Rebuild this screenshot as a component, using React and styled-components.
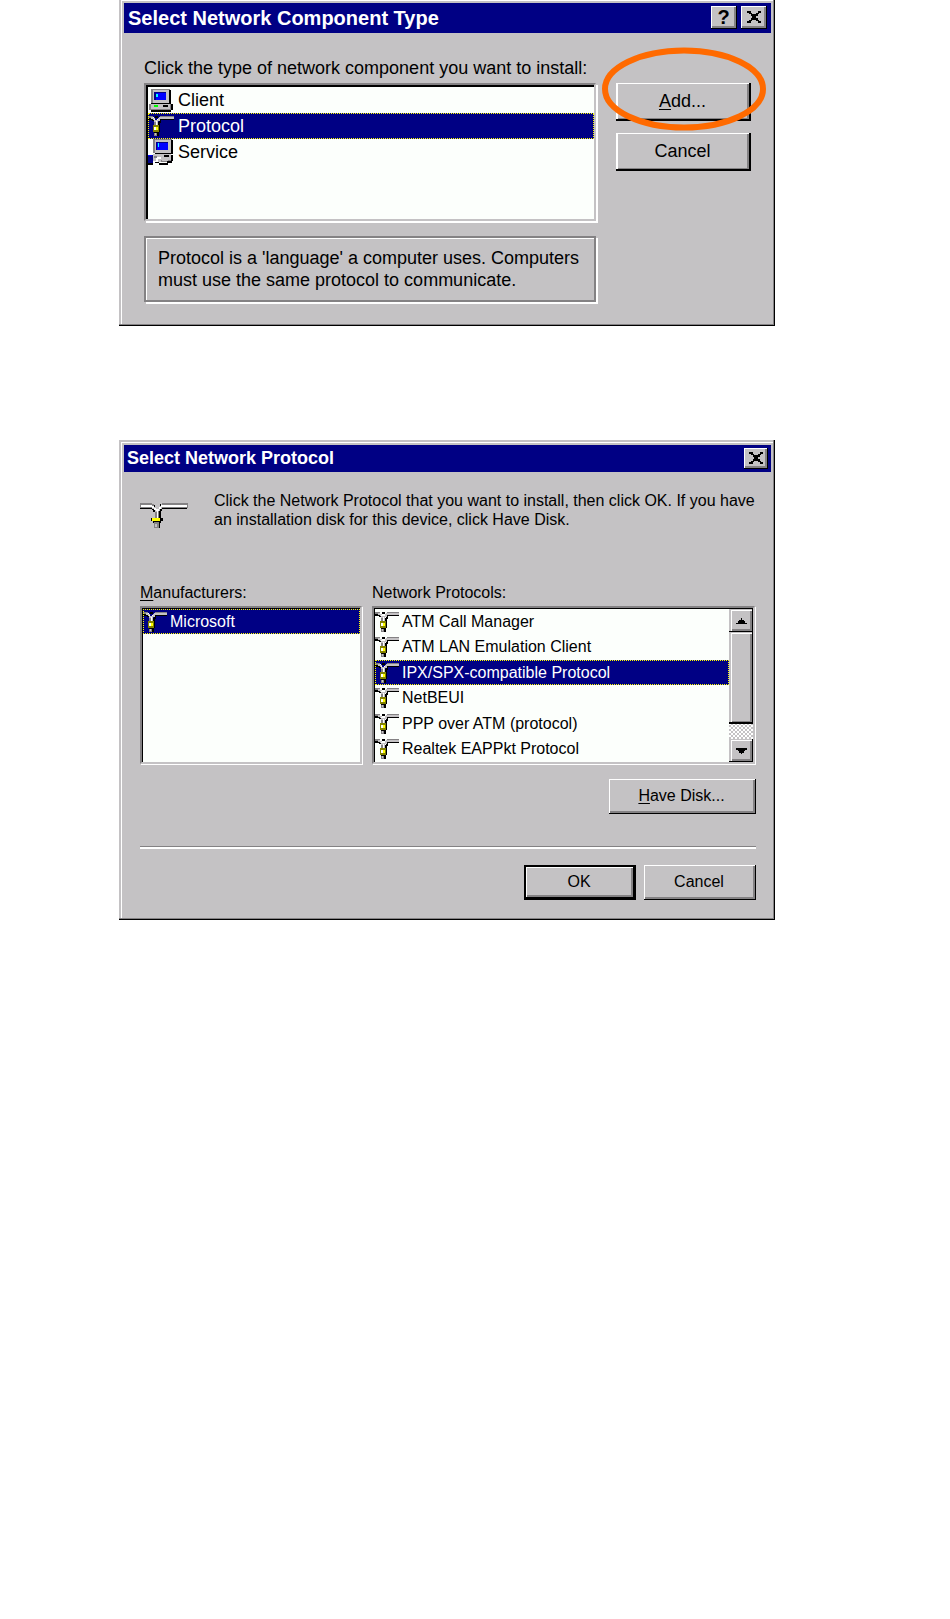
import React, { useState } from 'react'
import styled, { createGlobalStyle, css } from 'styled-components'

const face = '#c4c2c4'
const navy = '#000084'
const shade = '#848284'
const paper = '#fcfffc'

const components = [
  { name: 'Client', icon: 'client' },
  { name: 'Protocol', icon: 'protocol' },
  { name: 'Service', icon: 'service' },
]

const protocols = [
  'ATM Call Manager',
  'ATM LAN Emulation Client',
  'IPX/SPX-compatible Protocol',
  'NetBEUI',
  'PPP over ATM (protocol)',
  'Realtek EAPPkt Protocol',
]

const ClientIcon = () => (
  <svg width="26" height="26" viewBox="0 0 26 26" shapeRendering="crispEdges" aria-hidden="true">
    <path fill={shade} d="M3 2h19v14H3z" />
    <path fill={face} d="M5 3h16v13H5z" />
    <path fill="#000" d="M21 3h2v14h-2zM3 16h20v1H3z" />
    <path fill={navy} d="M6 5h12v8H6z" />
    <path fill="#00f" d="M8 6h10v7H8z" />
    <path fill="#0ff" d="M8 7h2v3H8z" />
    <path fill={shade} d="M1 17h22v6H1z" />
    <path fill={face} d="M3 17h19v5H3z" />
    <path fill="#0f0" d="M6 18h4v2H6z" />
    <path fill="#000" d="M15 18h5v2h-5zM23 17h2v6h-2zM3 23h20v2H3z" />
  </svg>
)

const ServiceIcon = () => (
  <svg width="26" height="28" viewBox="0 0 26 28" shapeRendering="crispEdges" aria-hidden="true">
    <path fill={shade} d="M5 1h19v14H5z" />
    <path fill={face} d="M7 2h16v13H7z" />
    <path fill="#000" d="M23 2h2v14h-2zM7 15h17v1H7z" />
    <path fill={navy} d="M8 4h12v8H8z" />
    <path fill="#00f" d="M9 5h11v7H9z" />
    <path fill="#0ff" d="M10 5h1v4h-1z" />
    <path fill={face} d="M5 16h18v7H5z" />
    <path fill="#fff" d="M8 19h5v5H8z" />
    <path fill={shade} d="M6 18h3v2H6zM13 22h10v2H13z" />
    <path fill={face} d="M10 21h3v3h-3zM14 21h6v2h-6z" />
    <path fill="#000" d="M16 17h5v2h-5zM23 17h2v6h-2zM7 24h4v1H7zM11 25h9v2h-9zM19 23h5v2h-5z" />
    <path fill={navy} d="M0 17h5v8H0z" />
    <path fill="#00f" d="M0 17h4v1H0z" />
    <path fill="#000" d="M0 25h5v2H0z" />
  </svg>
)

const ProtocolIcon = ({ size = 24 }) => (
  <svg width={size} height="24" viewBox={`0 0 ${size} 24`} shapeRendering="crispEdges" aria-hidden="true">
    <path fill={shade} d="M0 2h5v2H0zM12 2h14v1H12z" />
    <path fill={face} d="M12 3h14v2H12z" />
    <path fill="#000" d="M0 4h4v2H0zM4 5h2v2H4zM12 5h14v1H12zM7 2h3v2H7zM11 6h2v3h-2zM10 8h2v4h-2z" />
    <path fill={face} d="M3 3h2v2H3zM5 4h2v2H5zM6 6h2v2H6zM11 3h2v2h-2zM10 4h2v3h-2zM8 6h2v6H8z" />
    <path fill="#fff" d="M5 3h1v1H5zM6 5h1v1H6zM8 7h1v5H8zM9 5h1v1H9z" />
    <path fill={shade} d="M6 8h2v4H6z" />
    <path fill="#848200" d="M5 11h6v7H5z" />
    <path fill="#ff0" d="M6 13h4v3H6z" />
    <path fill="#fff" d="M6 13h2v3H6z" />
    <path fill="#000" d="M11 12h1v6h-1zM6 18h5v1H6zM9 19h2v3H9z" />
    <path fill={shade} d="M6 19h3v3H6z" />
    <path fill={face} d="M7 19h1v2H7z" />
  </svg>
)

const LargeProtocolIcon = () => (
  <svg width="48" height="26" viewBox="0 0 48 26" shapeRendering="crispEdges" aria-hidden="true">
    <path fill={shade} d="M0 0h12v5H0zM22 0h26v5H22z" />
    <path fill="#000" d="M0 5h12v1H0zM22 5h25v1H22zM12 6h2v1h-2zM13 7h2v2h-2zM20 6h2v2h-2zM19 8h2v7h-2zM14 2h1v2h-1zM20 1h1v2h-1z" />
    <path fill={shade} d="M12 1h2v2h-2zM15 9h2v6h-2zM18 8h1v7h-1z" />
    <path fill="#fff" d="M1 2h11v2H1zM23 2h24v2H23zM12 3h2v2h-2zM14 5h2v2h-2zM21 2h2v2h-2zM19 4h2v2h-2zM16 6h3v2h-3zM17 8h1v7h-1z" />
    <path fill={face} d="M13 5h1v1h-1zM15 7h1v1h-1zM19 6h1v1h-1z" />
    <path fill="#000" d="M11 15h12v3H11zM13 18h8v2h-8zM18 20h2v5h-2z" />
    <path fill="#ff0" d="M12 15h8v3h-8z" />
    <path fill={shade} d="M14 19h5v6h-5z" />
    <path fill={face} d="M15 21h2v3h-2z" />
  </svg>
)

const CrossIcon = () => (
  <svg width="14" height="12" viewBox="0 0 8 7" preserveAspectRatio="none" shapeRendering="crispEdges" aria-hidden="true">
    <path d="M0 0h2v1h1v1h2V1h1V0h2v1H7v1H6v1H5v1h1v1h1v1h1v1H6V6H5V5H3v1H2v1H0V6h1V5h1V4h1V3H2V2H1V1H0z" />
  </svg>
)

const ArrowIcon = ({ down }) => (
  <svg width="11" height="6" viewBox="0 0 7 4" preserveAspectRatio="none" shapeRendering="crispEdges" aria-hidden="true">
    <path d={down ? 'M3 4h1V3h1V2h1V1h1V0H0v1h1v1h1v1h1z' : 'M3 0h1v1h1v1h1v1h1v1H0V3h1V2h1V1h1z'} />
  </svg>
)

const icons = { client: ClientIcon, protocol: ProtocolIcon, service: ServiceIcon }

const App = () => {
  const [component, setComponent] = useState('Protocol')
  const [protocol, setProtocol] = useState('IPX/SPX-compatible Protocol')

  return (
    <Page>
      <GlobalStyle />
      <Dialog $cut role="dialog" aria-labelledby="component-title">
        <TitleBar $large>
          <Title $large id="component-title">Select Network Component Type</Title>
          <TitleButton $large aria-label="Help">?</TitleButton>
          <TitleButton $large aria-label="Close"><CrossIcon /></TitleButton>
        </TitleBar>
        <ComponentBody>
          <ComponentMain>
            <Label $large id="component-label">Click the type of network component you want to install:</Label>
            <ComponentList role="listbox" aria-labelledby="component-label">
              {components.map(({ name, icon }) => {
                const Icon = icons[icon]
                return (
                  <Item
                    key={name}
                    $large
                    role="option"
                    aria-selected={component === name}
                    onClick={() => setComponent(name)}
                  >
                    <Icon size={26} />
                    {name}
                  </Item>
                )
              })}
            </ComponentList>
            <Description>
              Protocol is a 'language' a computer uses. Computers must use the same protocol to communicate.
            </Description>
          </ComponentMain>
          <SideButtons>
            <Marked>
              <Button $large><u>A</u>dd...</Button>
              <Ring viewBox="0 0 164 84" aria-hidden="true">
                <ellipse cx="82" cy="42" rx="79" ry="38.5" fill="none" stroke="#ff6a00" strokeWidth="6" />
              </Ring>
            </Marked>
            <Button $large>Cancel</Button>
          </SideButtons>
        </ComponentBody>
      </Dialog>

      <Dialog role="dialog" aria-labelledby="protocol-title">
        <TitleBar>
          <Title id="protocol-title">Select Network Protocol</Title>
          <TitleButton aria-label="Close"><CrossIcon /></TitleButton>
        </TitleBar>
        <ProtocolBody>
          <Intro>
            <LargeProtocolIcon />
            <p>
              Click the Network Protocol that you want to install, then click OK. If you have
              an installation disk for this device, click Have Disk.
            </p>
          </Intro>
          <Lists>
            <div>
              <Label id="manufacturer-label"><u>M</u>anufacturers:</Label>
              <ProtocolList role="listbox" aria-labelledby="manufacturer-label">
                <Item role="option" aria-selected="true"><ProtocolIcon />Microsoft</Item>
              </ProtocolList>
            </div>
            <div>
              <Label id="protocol-label">Network Protocols:</Label>
              <ScrollFrame>
                <Items role="listbox" aria-labelledby="protocol-label">
                  {protocols.map(name => (
                    <Item
                      key={name}
                      role="option"
                      aria-selected={protocol === name}
                      onClick={() => setProtocol(name)}
                    >
                      <ProtocolIcon />
                      {name}
                    </Item>
                  ))}
                </Items>
                <ScrollBar>
                  <ScrollButton aria-label="Scroll up"><ArrowIcon /></ScrollButton>
                  <Thumb />
                  <ScrollButton aria-label="Scroll down"><ArrowIcon down /></ScrollButton>
                </ScrollBar>
              </ScrollFrame>
            </div>
          </Lists>
          <DiskRow>
            <Button $wide><u>H</u>ave Disk...</Button>
          </DiskRow>
          <Divider />
          <Footer>
            <Button $default>OK</Button>
            <Button>Cancel</Button>
          </Footer>
        </ProtocolBody>
      </Dialog>
    </Page>
  )
}

export default App

const GlobalStyle = createGlobalStyle`
  * {
    box-sizing: border-box;
  }
  body {
    margin: 0;
    background: #fff;
    color: #000;
    font-family: "Liberation Sans", Arial, sans-serif;
  }
  p, ul, h2 {
    margin: 0;
    padding: 0;
  }
  svg {
    flex: none;
    display: block;
  }
  u {
    text-underline-offset: 2px;
  }
`

const sunken = css`
  padding: 1px 0 0 1px;
  border: 2px solid;
  border-color: ${shade} ${face} ${face} ${shade};
  background: ${paper};
  box-shadow: 1px 1px 0 #fff, inset 1px 1px 0 #000;
`

const Page = styled.main`
  display: flex;
  flex-direction: column;
  gap: 114px;
  padding: 0 175px 60px 119px;
`

const Dialog = styled.section`
  padding: ${props => props.$cut ? '3px' : '5px'} 4px 0 5px;
  background: ${face};
  box-shadow:
    inset -1px -1px 0 #000,
    inset -2px -2px 0 ${shade},
    inset 2px ${props => props.$cut ? '0' : '2px'} 0 ${face},
    inset 3px ${props => props.$cut ? '1px' : '3px'} 0 #fff;
`

const TitleBar = styled.header`
  display: flex;
  align-items: center;
  gap: 4px;
  height: ${props => props.$large ? '30px' : '27px'};
  padding: ${props => props.$large ? '0 4px 1px' : '0 3px 1px'};
  background: ${navy};
`

const Title = styled.h2`
  flex: 1;
  color: #fff;
  font-size: ${props => props.$large ? '20px' : '18px'};
  line-height: 24px;
`

const TitleButton = styled.button`
  display: flex;
  align-items: center;
  justify-content: center;
  width: ${props => props.$large ? '26px' : '24px'};
  height: ${props => props.$large ? '23px' : '21px'};
  padding: 0 1px 1px 0;
  border: 0;
  background: ${face};
  font: bold 20px/20px "Liberation Sans", Arial, sans-serif;
  color: #000;
  box-shadow: inset -1px -1px 0 #000, inset 1px 1px 0 #fff, inset -3px -3px 0 ${shade};
`

const Label = styled.div`
  margin-bottom: ${props => props.$large ? '3px' : '2px'};
  font-size: ${props => props.$large ? '18px' : '16px'};
  line-height: ${props => props.$large ? '24px' : '22px'};
  white-space: nowrap;
`

const ComponentBody = styled.div`
  display: flex;
  gap: 20px;
  padding: 23px 20px 24px;
`

const ComponentMain = styled.div`
  flex: 1;
  min-width: 0;
`

const Items = styled.ul`
  flex: 1;
  display: grid;
  grid-auto-rows: 1fr;
  min-width: 0;
  list-style: none;
`

const ComponentList = styled.ul`
  ${sunken}
  height: 138px;
  padding: 2px 0 0 2px;
  box-shadow: 2px 2px 0 #fff, inset 2px 2px 0 #000;
  list-style: none;
`

const ProtocolList = styled.ul`
  ${sunken}
  height: 158px;
  list-style: none;
`

const Item = styled.li`
  display: flex;
  align-items: center;
  gap: ${props => props.$large ? '4px' : '3px'};
  height: ${props => props.$large ? '26px' : '25px'};
  font-size: ${props => props.$large ? '18px' : '16px'};
  white-space: nowrap;
  cursor: default;

  &[aria-selected='true'] {
    color: #fff;
    background: ${navy};
    outline: 1px dotted #ff0;
    outline-offset: -1px;
  }
`

const Description = styled.p`
  height: 66px;
  margin-top: 15px;
  padding: 9px 12px;
  border: 2px solid ${shade};
  font-size: 18px;
  line-height: 22px;
  box-shadow: 2px 2px 0 #fff, inset 1px 1px 0 #fff;
`

const SideButtons = styled.div`
  display: flex;
  flex-direction: column;
  gap: 12px;
  width: 135px;
  padding-top: 27px;
`

const Marked = styled.div`
  position: relative;
  display: flex;
`

// highlight ring that lies over the Add button
const Ring = styled.svg`
  position: absolute;
  left: -14px;
  top: -36px;
  width: 164px;
  height: 84px;
  pointer-events: none;
`

const Button = styled.button`
  width: ${props => props.$large ? '100%' : props.$wide ? '147px' : '112px'};
  height: ${props => props.$large ? '38px' : '35px'};
  padding: 0 2px 2px 0;
  border: ${props => props.$default ? '2px solid #000' : '0'};
  background: ${face};
  color: #000;
  font-family: inherit;
  font-size: ${props => props.$large ? '18px' : '16px'};
  box-shadow: ${props => props.$large
    ? `inset -2px -2px 0 #000, inset 2px 1px 0 #fff, inset -4px -3px 0 ${shade}`
    : `inset -1px -1px 0 #000, inset 1px 1px 0 #fff, inset -3px -3px 0 ${shade}`};
`

const ProtocolBody = styled.div`
  padding: 19px 15px 20px 16px;
`

const Intro = styled.div`
  display: flex;
  gap: 26px;
  font-size: 16px;
  line-height: 19px;

  svg {
    margin-top: 12px;
  }
`

const Lists = styled.div`
  display: grid;
  grid-template-columns: 222fr 383fr;
  gap: 10px;
  margin-top: 53px;
  padding-right: 1px;
`

const ScrollFrame = styled.div`
  ${sunken}
  display: flex;
  height: 158px;
`

const ScrollBar = styled.div`
  display: flex;
  flex-direction: column;
  width: 24px;
  background: repeating-conic-gradient(#fff 0 25%, ${face} 0 50%) 0 0 / 4px 4px;
`

const ScrollButton = styled.button`
  display: flex;
  align-items: center;
  justify-content: center;
  height: 23px;
  padding: 0;
  border: 0;
  background: ${face};
  box-shadow: inset -1px -1px 0 #000, inset 2px 1px 0 ${face}, inset 3px 2px 0 #fff, inset -3px -3px 0 ${shade};
`

const Thumb = styled.div`
  flex: 1;
  margin-bottom: 15px;
  background: ${face};
  box-shadow: inset -1px -2px 0 #000, inset 2px 1px 0 ${face}, inset 3px 2px 0 #fff, inset -3px -3px 0 ${shade};
`

const DiskRow = styled.div`
  display: flex;
  justify-content: flex-end;
  margin-top: 15px;
`

const Divider = styled.hr`
  height: 3px;
  margin: 32px 0 16px;
  border: 0;
  border-top: 1px solid ${shade};
  background: #fff;
`

const Footer = styled.div`
  display: flex;
  justify-content: flex-end;
  gap: 8px;
`
